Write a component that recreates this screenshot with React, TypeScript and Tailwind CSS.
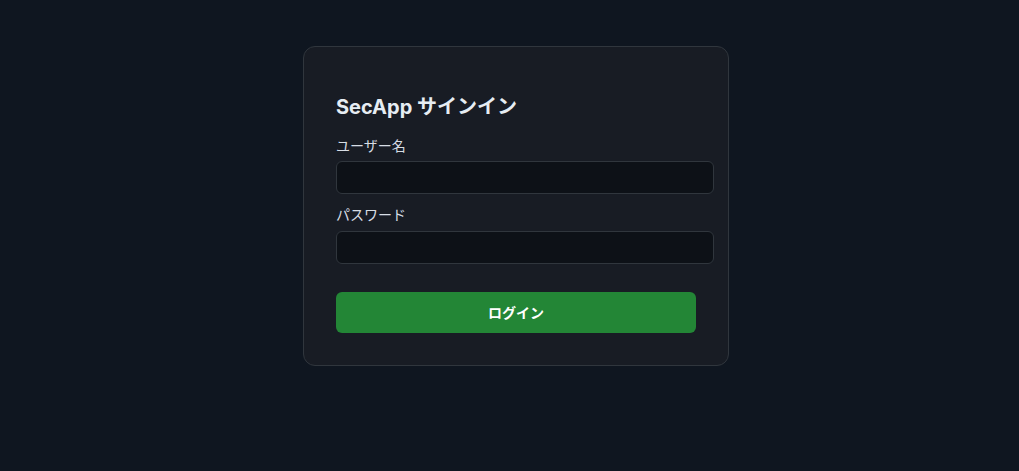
export default function App() {
  return (
    <div className="min-h-screen w-full bg-[#0f1620] pt-[46px] font-['Inter','Noto_Sans_CJK_JP',sans-serif]">
      <div className="mx-auto ml-[303px] w-[426px] rounded-xl border border-[#30363d] bg-[#181c24] pt-[46px] pb-8 pl-8 pr-8">
        <h1 className="text-[20px] leading-[28px] font-bold text-[#e6edf3]">SecApp サインイン</h1>

        <label className="mt-[15px] block text-[14px] leading-[20px] text-[#d7dde4]">ユーザー名</label>
        <input
          type="text"
          className="mt-[5px] block h-[33px] w-[378px] rounded-md border border-[#30363d] bg-[#0d1117] px-2 text-[14px] text-[#e6edf3] outline-none"
        />

        <label className="mt-[11px] block text-[14px] leading-[20px] text-[#d7dde4]">パスワード</label>
        <input
          type="password"
          className="mt-[6px] block h-[33px] w-[378px] rounded-md border border-[#30363d] bg-[#0d1117] px-2 text-[14px] text-[#e6edf3] outline-none"
        />

        <button className="mt-[28px] block h-[41px] w-[360px] rounded-md bg-[#238636] text-[14px] font-bold text-white">
          ログイン
        </button>
      </div>
    </div>
  )
}
